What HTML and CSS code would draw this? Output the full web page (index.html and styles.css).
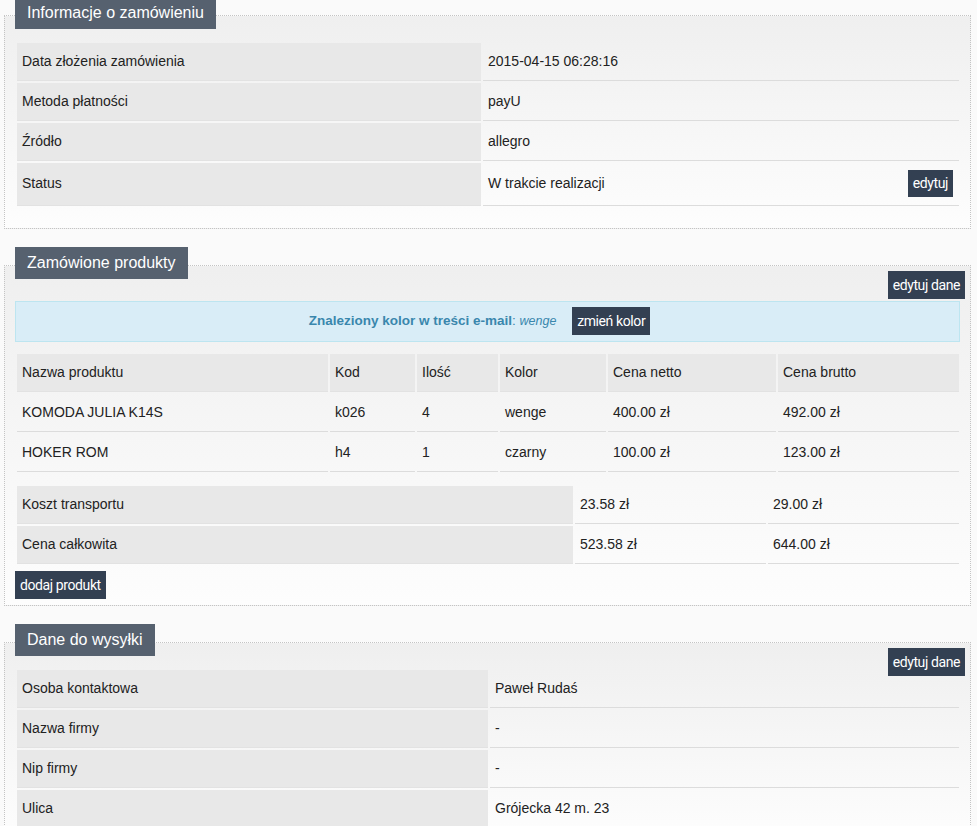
FILE: index.html
```html
<!DOCTYPE html>
<html lang="pl">
<head>
<meta charset="utf-8">
<title>Zamówienie</title>
<link rel="stylesheet" href="styles.css">
</head>
<body>
<section class="panel panel-first">
  <div class="legend">Informacje o zamówieniu</div>
  <div class="box box-top">
    <table class="kv kv-info">
      <tr><td class="lbl">Data złożenia zamówienia</td><td>2015-04-15 06:28:16</td></tr>
      <tr><td class="lbl">Metoda płatności</td><td>payU</td></tr>
      <tr><td class="lbl">Źródło</td><td>allegro</td></tr>
      <tr class="status-row"><td class="lbl">Status</td><td><div class="status"><span>W trakcie realizacji</span><button class="btn">edytuj</button></div></td></tr>
    </table>
  </div>
</section>

<section class="panel">
  <div class="legend">Zamówione produkty</div>
  <div class="box">
    <div class="actions"><button class="btn btn-edge">edytuj dane</button></div>
    <div class="notice"><strong>Znaleziony kolor w treści e-mail</strong>: <em>wenge</em> <button class="btn btn-inline">zmień kolor</button></div>
    <table class="grid products">
      <colgroup><col class="c-name"><col class="c-code"><col class="c-qty"><col class="c-color"><col class="c-net"><col></colgroup>
      <tr><th>Nazwa produktu</th><th>Kod</th><th>Ilość</th><th>Kolor</th><th>Cena netto</th><th>Cena brutto</th></tr>
      <tr><td>KOMODA JULIA K14S</td><td>k026</td><td>4</td><td>wenge</td><td>400.00 zł</td><td>492.00 zł</td></tr>
      <tr><td>HOKER ROM</td><td>h4</td><td>1</td><td>czarny</td><td>100.00 zł</td><td>123.00 zł</td></tr>
    </table>
    <table class="grid totals">
      <colgroup><col class="t-lbl"><col class="t-net"><col></colgroup>
      <tr><td class="lbl">Koszt transportu</td><td>23.58 zł</td><td>29.00 zł</td></tr>
      <tr><td class="lbl">Cena całkowita</td><td>523.58 zł</td><td>644.00 zł</td></tr>
    </table>
    <button class="btn btn-add">dodaj produkt</button>
  </div>
</section>

<section class="panel">
  <div class="legend">Dane do wysyłki</div>
  <div class="box">
    <div class="actions actions-overlap"><button class="btn btn-edge">edytuj dane</button></div>
    <table class="kv kv-ship">
      <tr><td class="lbl">Osoba kontaktowa</td><td>Paweł Rudaś</td></tr>
      <tr><td class="lbl">Nazwa firmy</td><td>-</td></tr>
      <tr><td class="lbl">Nip firmy</td><td>-</td></tr>
      <tr><td class="lbl">Ulica</td><td>Grójecka 42 m. 23</td></tr>
    </table>
  </div>
</section>
</body>
</html>
```

FILE: styles.css
```css
html {
  overflow: hidden;
  background: #fafafa;
}
body {
  margin: 0 0 0 4px;
  width: 967px;
  font-family: "Liberation Sans", Arial, sans-serif;
  font-size: 14px;
  color: #222;
}
.panel {
  margin-top: 18px;
}
.panel-first {
  margin-top: -3px;
}
.legend {
  position: relative;
  display: block;
  width: max-content;
  margin-left: 11px;
  margin-bottom: -14px;
  height: 32px;
  line-height: 32px;
  padding: 0 12px;
  background: #56616f;
  color: #fff;
  font-size: 16px;
}
.box {
  border: 1px dotted #c4c4c4;
  background: linear-gradient(to bottom, #efefef, #fdfdfd);
  padding: 5px 10px 6px 10px;
}
.box-top {
  padding-top: 25px;
  padding-bottom: 20px;
}
table {
  border-collapse: separate;
  border-spacing: 2px;
  width: 946px;
  table-layout: fixed;
  font-size: 14px;
}
td, th {
  padding: 9px 5px;
  line-height: 19px;
  border-bottom: 1px solid #dcdcdc;
  text-align: left;
  font-weight: normal;
  vertical-align: middle;
  white-space: nowrap;
}
.lbl, th {
  background: #e8e8e8;
  border-bottom-color: #e2e2e2;
}
.kv-info .lbl { width: 454px; }
.kv-ship .lbl { width: 461px; }
.status-row td {
  padding: 7px 6px 8px 5px;
}
.status {
  display: flex;
  align-items: center;
  justify-content: space-between;
  height: 27px;
}
.btn {
  display: inline-block;
  border: 0;
  margin: 0;
  background: #334052;
  color: #fff;
  font-family: Roboto, "Open Sans", sans-serif;
  font-size: 14px;
  letter-spacing: -0.4px;
  height: 28px;
  line-height: 28px;
  padding: 0 5px;
  cursor: pointer;
}
.status .btn {
  height: 27px;
  line-height: 27px;
}
.actions {
  display: flex;
  justify-content: flex-end;
  margin-right: -5px;
  height: 28px;
}
.actions-overlap {
  margin-bottom: -8px;
}
.notice {
  margin-top: 2px;
  border: 1px solid #bde5f0;
  background: #d9edf7;
  padding: 5px 5px 6px;
  height: 28px;
  line-height: 28px;
  text-align: center;
  color: #3a87ad;
  font-size: 13.5px;
}
.notice strong { font-weight: bold; }
.notice em {
  font-style: italic;
  font-size: 12.5px;
}
.btn-inline {
  margin-left: 12px;
  margin-right: 16px;
  vertical-align: top;
}
.products { margin-top: 10px; }
.c-name { width: 311px; }
.c-code { width: 85px; }
.c-qty { width: 81px; }
.c-color { width: 106px; }
.c-net { width: 168px; }
.totals { margin-top: 10px; }
.t-lbl { width: 556px; }
.t-net { width: 191px; }
.btn-add {
  display: block;
  margin-top: 5px;
}
```
